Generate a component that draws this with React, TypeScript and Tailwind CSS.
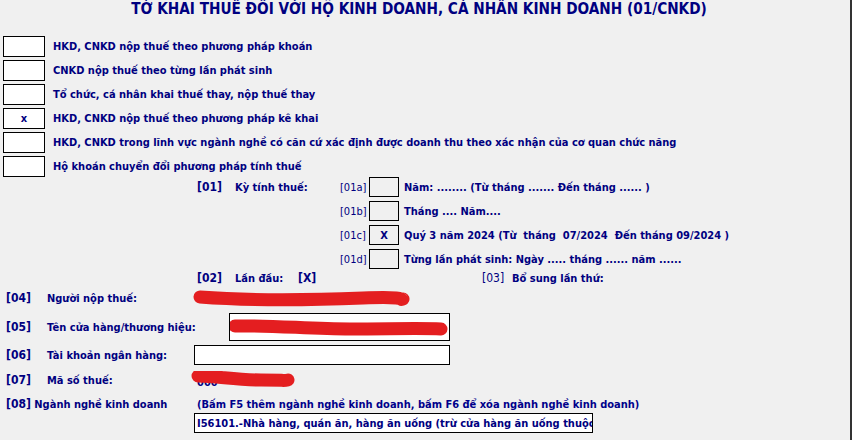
const checks = [
  { mark: "", label: "HKD, CNKD nộp thuế theo phương pháp khoán" },
  { mark: "", label: "CNKD nộp thuế theo từng lần phát sinh" },
  { mark: "", label: "Tổ chức, cá nhân khai thuế thay, nộp thuế thay" },
  { mark: "x", label: "HKD, CNKD nộp thuế theo phương pháp kê khai" },
  {
    mark: "",
    label:
      "HKD, CNKD trong lĩnh vực ngành nghề có căn cứ xác định được doanh thu theo xác nhận của cơ quan chức năng",
  },
  { mark: "", label: "Hộ khoán chuyển đổi phương pháp tính thuế" },
];

const periods = [
  { code: "[01a]", mark: "", text: "Năm: ........ (Từ tháng ....... Đến tháng ...... )" },
  { code: "[01b]", mark: "", text: "Tháng .... Năm...." },
  { code: "[01c]", mark: "X", text: "Quý 3 năm 2024 (Từ  tháng  07/2024  Đến tháng 09/2024 )" },
  { code: "[01d]", mark: "", text: "Từng lần phát sinh: Ngày ..... tháng ...... năm ......" },
];

// red marker used to hide personal data
const Scribble = ({ w, h, d }: { w: number; h: number; d: string }) => (
  <svg width={w} height={h} className="absolute left-0 top-0 pointer-events-none">
    <path d={d} fill="none" stroke="#e41e20" strokeWidth="13" strokeLinecap="round" strokeLinejoin="round" />
  </svg>
);

export default function App() {
  return (
    <div className="w-[852px] h-[440px] overflow-hidden bg-[#f0f0f0] border-r-2 border-[#333333] text-[#000080] text-[11px] font-['DejaVu_Sans_Condensed','DejaVu_Sans',sans-serif] leading-none">
      <div className="w-[838px] h-[18px] flex items-center justify-center pt-[2px] text-[15.2px] font-bold whitespace-nowrap">
        TỜ KHAI THUẾ ĐỐI VỚI HỘ KINH DOANH, CÁ NHÂN KINH DOANH (01/CNKD)
      </div>

      <div className="mt-[18px] flex flex-col gap-[3px]">
        {checks.map((c) => (
          <div key={c.label} className="flex items-center h-[21px]">
            <div className="ml-[3px] w-[42px] h-[21px] border border-black bg-white flex items-center justify-center font-bold">
              {c.mark}
            </div>
            <span className="ml-[8px] font-bold whitespace-nowrap">{c.label}</span>
          </div>
        ))}
      </div>

      <div className="flex flex-col gap-[4px]">
        {periods.map((p, i) => (
          <div key={p.code} className="flex items-center h-[20px] pl-[197px] whitespace-nowrap">
            <span className="w-[38px] font-bold text-[12px]">{i === 0 ? "[01]" : ""}</span>
            <span className="w-[105px] font-bold">{i === 0 ? "Kỳ tính thuế:" : ""}</span>
            <span className="w-[29px] text-[11px]">{p.code}</span>
            <div className="w-[30px] h-[20px] border border-black flex items-center justify-center font-bold">
              {p.mark}
            </div>
            <span className="ml-[5px] font-bold whitespace-pre">{p.text}</span>
          </div>
        ))}
      </div>

      <div className="flex items-center h-[18px] pl-[197px] whitespace-nowrap font-bold">
        <span className="w-[38px] text-[12px]">[02]</span>
        <span className="w-[63px]">Lần đầu:</span>
        <span className="w-[184px] text-[12px]">[X]</span>
        <span className="w-[30px] font-normal text-[12px]">[03]</span>
        <span>Bổ sung lần thứ:</span>
      </div>

      <div className="mt-[2px] flex items-center h-[18px] pl-[6px] whitespace-nowrap font-bold">
        <span className="w-[41px] text-[12px]">[04]</span>
        <span className="w-[146px]">Người nộp thuế:</span>
        <div className="relative w-[230px] h-[18px]">
          <Scribble w={230} h={18} d="M7 8 C 60 12, 120 11, 170 9 S 205 12, 210 10" />
        </div>
      </div>

      <div className="mt-[6px] flex items-center h-[28px] pl-[6px] whitespace-nowrap font-bold">
        <span className="w-[41px] text-[12px]">[05]</span>
        <span className="w-[182px]">Tên cửa hàng/thương hiệu:</span>
        <div className="relative w-[221px] h-[28px] border border-black bg-white">
          <Scribble w={221} h={28} d="M5 12 C 40 11, 80 15, 120 15 S 190 14, 211 15" />
        </div>
      </div>

      <div className="mt-[4px] flex items-center h-[20px] pl-[6px] whitespace-nowrap font-bold">
        <span className="w-[41px] text-[12px]">[06]</span>
        <span className="w-[147px]">Tài khoản ngân hàng:</span>
        <div className="w-[256px] h-[20px] border border-black bg-white" />
      </div>

      <div className="mt-[6px] flex items-center h-[18px] pl-[6px] whitespace-nowrap font-bold">
        <span className="w-[41px] text-[12px]">[07]</span>
        <span className="w-[144px]">Mã số thuế:</span>
        <div className="relative w-[110px] h-[18px]">
          <span className="absolute left-[6px] top-[6px]">000</span>
          <Scribble w={110} h={18} d="M7 5 C 25 5, 45 9, 70 9 S 92 10, 97 9" />
        </div>
      </div>

      <div className="mt-[6px] flex items-center h-[18px] pl-[6px] whitespace-nowrap font-bold">
        <span className="w-[191px]">
          <span className="text-[12px]">[08]</span> Ngành nghề kinh doanh
        </span>
        <span className="text-[#00008b]">
          (Bấm F5 thêm ngành nghề kinh doanh, bấm F6 để xóa ngành nghề kinh doanh)
        </span>
      </div>

      <div className="ml-[194px] w-[399px] h-[20px] border border-black bg-white overflow-hidden flex items-center pl-[2px] whitespace-nowrap font-bold">
        I56101.-Nhà hàng, quán ăn, hàng ăn uống (trừ cửa hàng ăn uống thuộc chuỗi cửa hàng ăn nhanh)
      </div>
    </div>
  );
}
